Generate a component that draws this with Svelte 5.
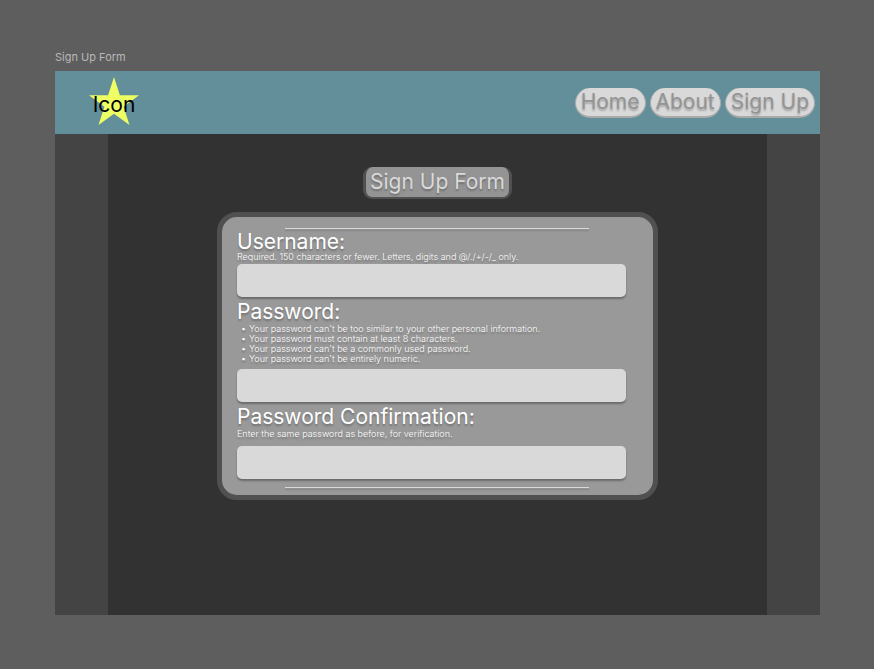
<script>
  const links = ['Home', 'About', 'Sign Up'];
  const rules = [
    "Your password can't be too similar to your other personal information.",
    'Your password must contain at least 8 characters.',
    "Your password can't be a commonly used password.",
    "Your password can't be entirely numeric."
  ];
</script>

<div class="canvas">
  <div class="caption">Sign Up Form</div>
  <div class="frame">
    <header>
      <a class="logo" href="#home">
        <svg viewBox="0 0 50 48" width="50" height="48" aria-hidden="true">
          <path fill="#edff63" d="M25 0 30.9 18.3H50L34.6 29.7 40.5 48 25 36.7 9.5 48 15.4 29.7 0 18.3H19.1Z" />
        </svg>
        <span>Icon</span>
      </a>
      <nav>
        {#each links as link}
          <a href="#{link.toLowerCase().replace(' ', '-')}">{link}</a>
        {/each}
      </nav>
    </header>
    <main>
      <h1>Sign Up Form</h1>
      <form>
        <hr />
        <div class="field">
          <label for="username">Username:</label>
          <p>Required. 150 characters or fewer. Letters, digits and @/./+/-/_ only.</p>
          <input id="username" type="text" />
        </div>
        <div class="field">
          <label for="password">Password:</label>
          <ul>
            {#each rules as rule}
              <li>{rule}</li>
            {/each}
          </ul>
          <input id="password" type="password" />
        </div>
        <div class="field">
          <label for="confirm">Password Confirmation:</label>
          <p class="roomy">Enter the same password as before, for verification.</p>
          <input id="confirm" type="password" />
        </div>
        <hr />
      </form>
    </main>
  </div>
</div>

<style>
  :global(body) {
    background: #5e5e5e;
  }
  .canvas {
    box-sizing: border-box;
    min-height: 100vh;
    padding: 48px 54px 54px 55px;
    display: flex;
    flex-direction: column;
    background: #5e5e5e;
    font-family: Inter, 'Liberation Sans', sans-serif;
  }
  .caption {
    height: 23px;
    font-size: 11px;
    line-height: 19px;
    color: #b8b8b8;
  }
  .frame {
    flex: 1;
    display: flex;
    flex-direction: column;
    background: #444;
  }
  header {
    box-sizing: border-box;
    min-height: 63px;
    padding: 0 5px 0 34px;
    display: flex;
    align-items: center;
    justify-content: space-between;
    background: #628f9a;
  }
  .logo {
    display: grid;
    place-items: center;
    margin-bottom: 4px;
    color: #000;
    font-size: 21px;
    line-height: 28px;
    text-decoration: none;
  }
  .logo svg,
  .logo span {
    grid-area: 1 / 1;
  }
  .logo span {
    padding-top: 8px;
  }
  nav {
    display: flex;
    gap: 4px;
  }
  nav a {
    padding: 0 5px;
    border: 1px solid #aaa;
    border-width: 0 1px 2px;
    border-radius: 15px;
    background: #d9d9d9;
    color: #949494;
    font-size: 21px;
    line-height: 28px;
    text-decoration: none;
    text-shadow: 0 2px 2px rgba(0, 0, 0, 0.25);
  }
  main {
    flex: 1;
    margin: 0 53px;
    padding: 33px 16px;
    display: flex;
    flex-direction: column;
    align-items: center;
    background: #323232;
  }
  h1 {
    margin: 0 0 13px;
    padding: 0 4px;
    border: 3px solid #505050;
    border-width: 0 3px 2px;
    border-radius: 9px;
    background: #949494;
    color: #d9d9d9;
    font-size: 21px;
    font-weight: 400;
    line-height: 30px;
    text-shadow: 0 2px 2px rgba(0, 0, 0, 0.25);
  }
  form {
    box-sizing: border-box;
    width: 100%;
    max-width: 441px;
    padding: 11px 27px 7px 15px;
    border: 5px solid #505050;
    border-radius: 20px;
    background: #999;
    color: #fff;
  }
  hr {
    height: 1px;
    margin: 0 37px 0 48px;
    border: 0;
    background: #d9d9d9;
    box-shadow: 0 2px 2px rgba(0, 0, 0, 0.2);
  }
  .field {
    display: flex;
    flex-direction: column;
    padding-top: 3px;
  }
  .field + .field {
    padding-top: 5px;
  }
  .field + hr {
    margin-top: 8px;
  }
  label {
    font-size: 21px;
    line-height: 20px;
    text-shadow: 0 2px 2px rgba(0, 0, 0, 0.25);
  }
  p,
  ul {
    margin: 0 0 2px;
    font-size: 9px;
    font-weight: 300;
    line-height: 10px;
    text-shadow: 0 2px 2px rgba(0, 0, 0, 0.25);
  }
  ul {
    margin: 2px 0 5px;
    padding-left: 4px;
    list-style: none;
  }
  li {
    display: flex;
  }
  li::before {
    content: '•';
    width: 8px;
  }
  .roomy {
    margin: 2px 0 7px;
  }
  input {
    box-sizing: border-box;
    width: 100%;
    height: 33px;
    padding: 0 8px;
    border: 0;
    border-radius: 5px;
    background: #d9d9d9;
    color: #323232;
    font: inherit;
    box-shadow: 0 2px 2px rgba(0, 0, 0, 0.3);
  }
</style>
